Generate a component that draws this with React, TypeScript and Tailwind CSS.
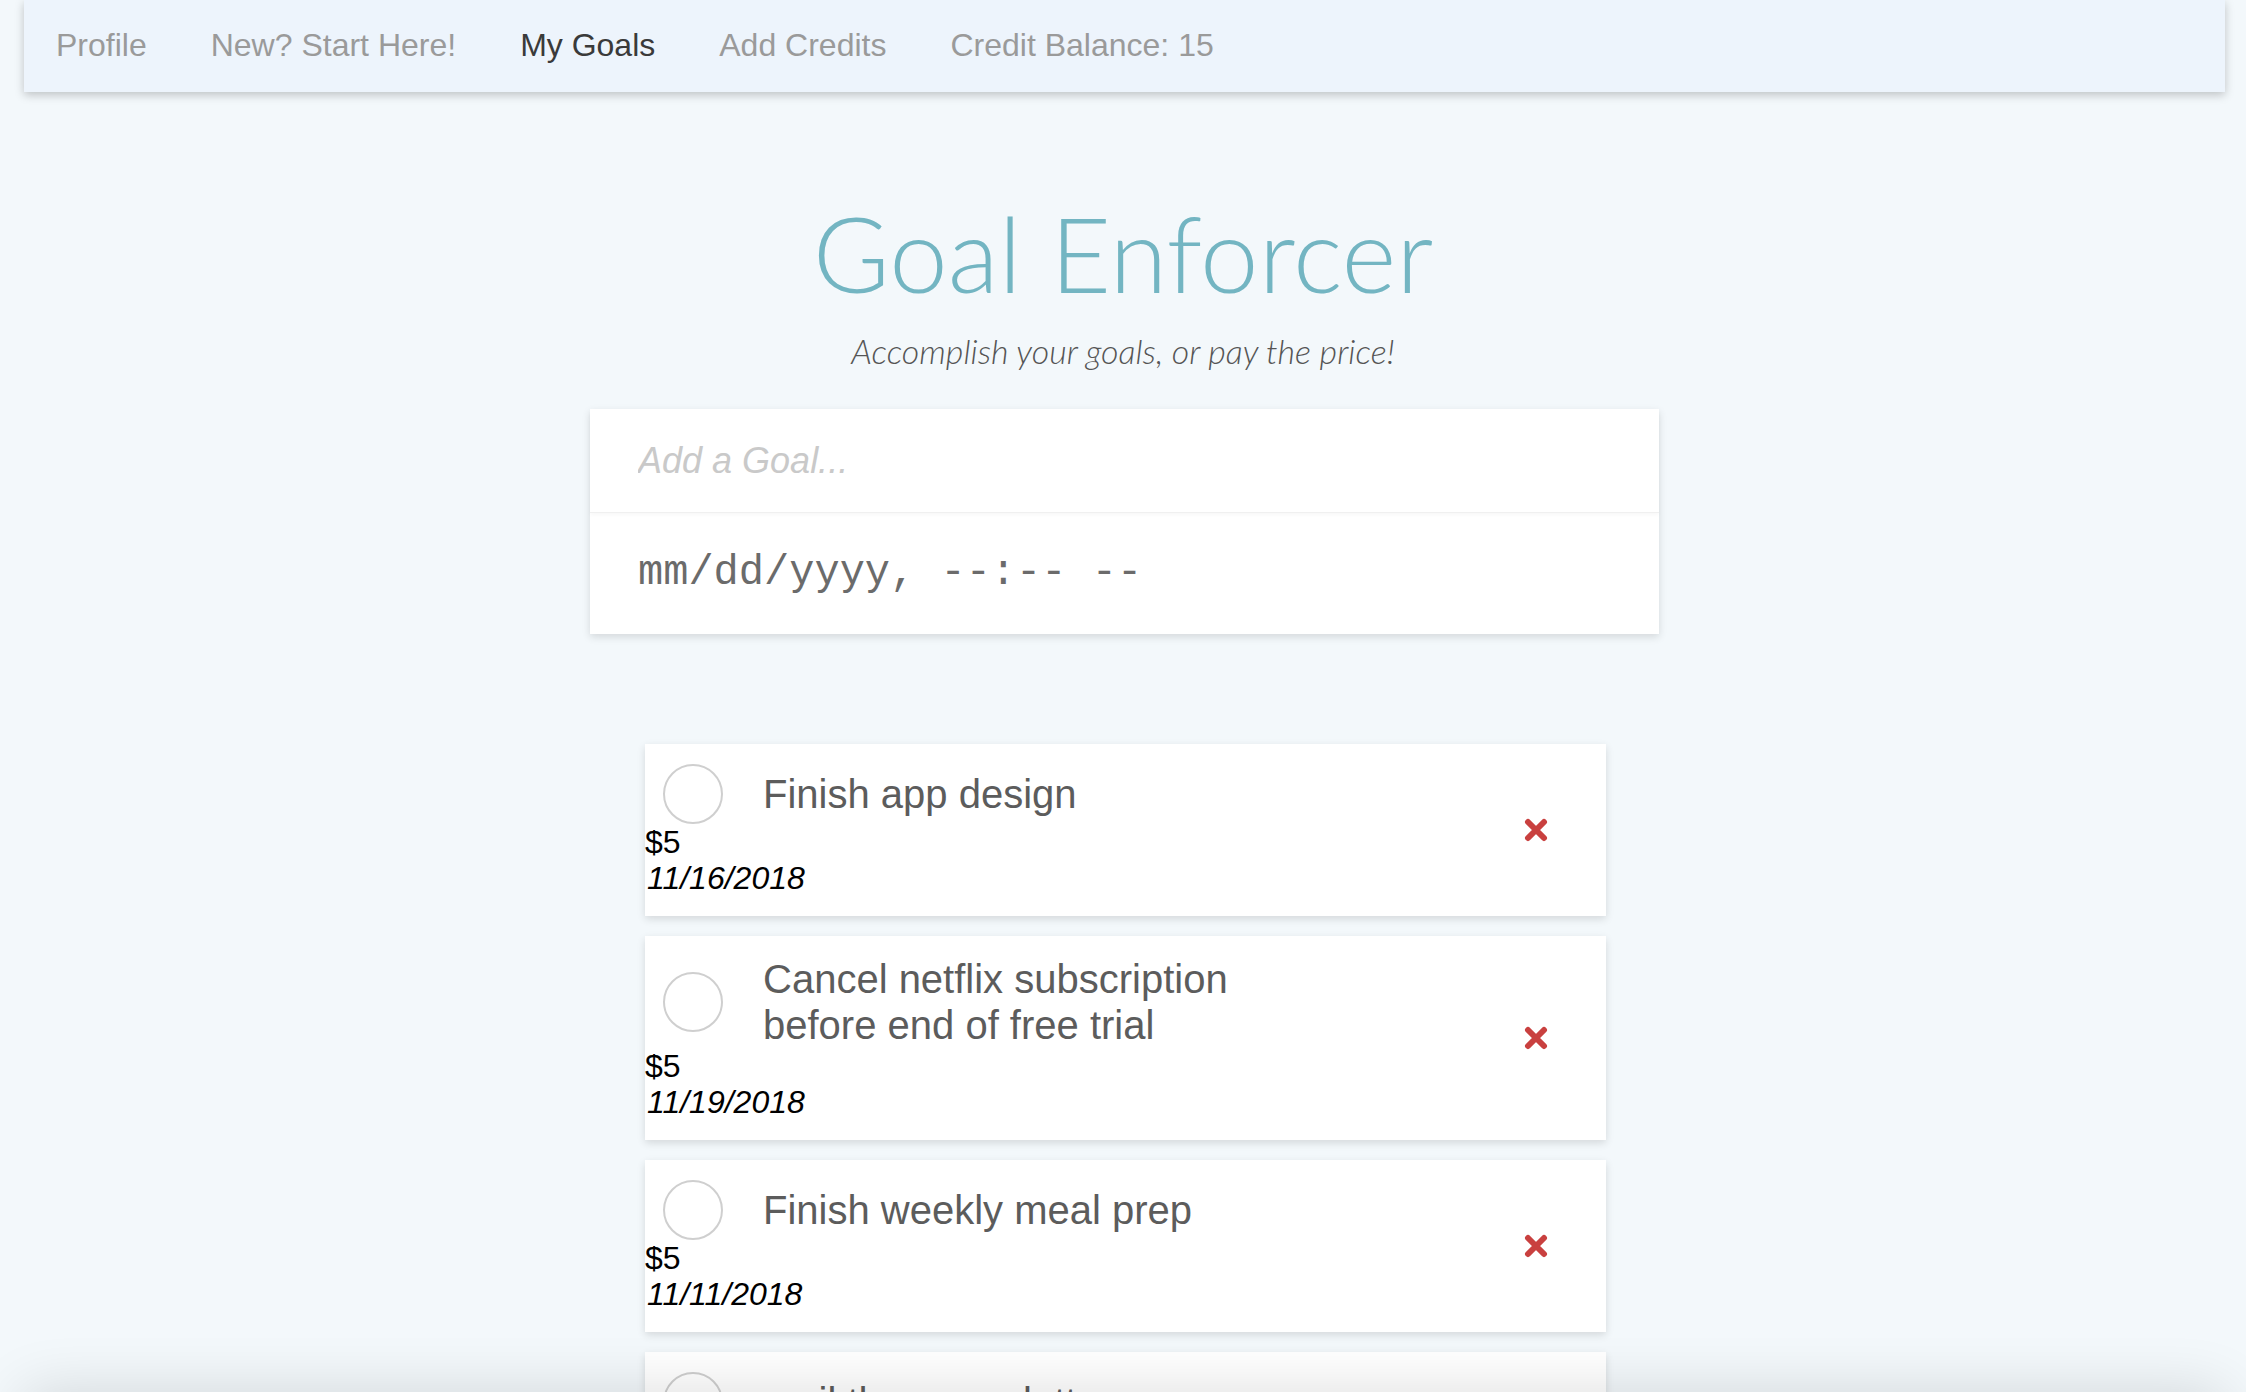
import React from 'react'

interface Goal {
  id: number
  title: string
  amount: number
  date: string
}

const goals: Goal[] = [
  { id: 1, title: 'Finish app design', amount: 5, date: '11/16/2018' },
  { id: 2, title: 'Cancel netflix subscription before end of free trial', amount: 5, date: '11/19/2018' },
  { id: 3, title: 'Finish weekly meal prep', amount: 5, date: '11/11/2018' },
  { id: 4, title: 'mail the cover letter', amount: 5, date: '11/21/2018' }
]

const navLinks = ['Profile', 'New? Start Here!', 'My Goals', 'Add Credits', 'Credit Balance: 15']

const RemoveIcon = () => (
  <svg width="24" height="24" viewBox="0 0 24 24" className="text-[#c9403f]">
    <path d="M4 4 L20 20 M20 4 L4 20" stroke="currentColor" strokeWidth="6" strokeLinecap="round" />
  </svg>
)

const GoalCard: React.FC<{ goal: Goal }> = ({ goal }) => (
  <div className="flex items-center bg-white shadow-[0_3px_8px_rgba(0,0,0,0.13)]">
    <div className="flex flex-1 flex-col py-5">
      <div className="flex items-center gap-10 pl-[18px]">
        <button
          type="button"
          className="size-[60px] shrink-0 rounded-full border-2 border-[#cfcfcf] bg-white"
        />
        <span className="max-w-[520px] text-[40px] leading-[46px] text-[#5c5c5c]">
          {goal.title}
        </span>
      </div>
      <span className="text-[32px] leading-9 text-black">${goal.amount}</span>
      <span className="pl-[2px] text-[32px] italic leading-9 text-black">{goal.date}</span>
    </div>
    <button type="button" className="mr-[58px]">
      <RemoveIcon />
    </button>
  </div>
)

export default function App() {
  return (
    <div className="relative min-h-screen bg-[#f3f8fb] font-['Liberation_Sans',Arial,sans-serif]">
      <nav className="ml-6 mr-[21px] flex h-[92px] items-center bg-[#edf4fc] pb-[2px] shadow-[0_3px_9px_rgba(0,0,0,0.22)]">
        {navLinks.map(link => (
          <a
            key={link}
            href="#"
            className={`px-8 text-[32px] ${link === 'My Goals' ? 'text-[#3a3a3a]' : 'text-[#9a9a9a]'}`}
          >
            {link}
          </a>
        ))}
      </nav>

      <main className="flex flex-col items-center pt-[108px]">
        <h1 className="font-['Lato',sans-serif] text-[105px] font-light leading-none text-[#73b5c2]">
          Goal Enforcer
        </h1>
        <p className="mt-5 font-['Lato',sans-serif] text-[34px] font-light italic text-[#555]">
          Accomplish your goals, or pay the price!
        </p>

        <div className="ml-[3px] mt-[33px] flex w-[1069px] flex-col bg-white shadow-[0_3px_8px_rgba(0,0,0,0.13)]">
          <input
            type="text"
            placeholder="Add a Goal..."
            className="h-[104px] border-b border-[#f0f0f0] px-12 text-[36px] italic text-[#555] outline-none placeholder:text-[#c9c9c9] shadow-[0_2px_4px_rgba(0,0,0,0.03)]"
          />
          <div className="flex h-[121px] items-center px-12 font-['Liberation_Mono',monospace] text-[42px] text-[#6b6b6b]">
            mm/dd/yyyy, --:-- --
          </div>
        </div>

        <div className="ml-[5px] mt-[110px] flex w-[961px] flex-col gap-5 pb-10">
          {goals.map(goal => (
            <GoalCard key={goal.id} goal={goal} />
          ))}
        </div>
      </main>

      <div className="pointer-events-none fixed left-6 right-[21px] top-full h-20 shadow-[0_0_60px_rgba(0,0,0,0.14)]" />
    </div>
  )
}
